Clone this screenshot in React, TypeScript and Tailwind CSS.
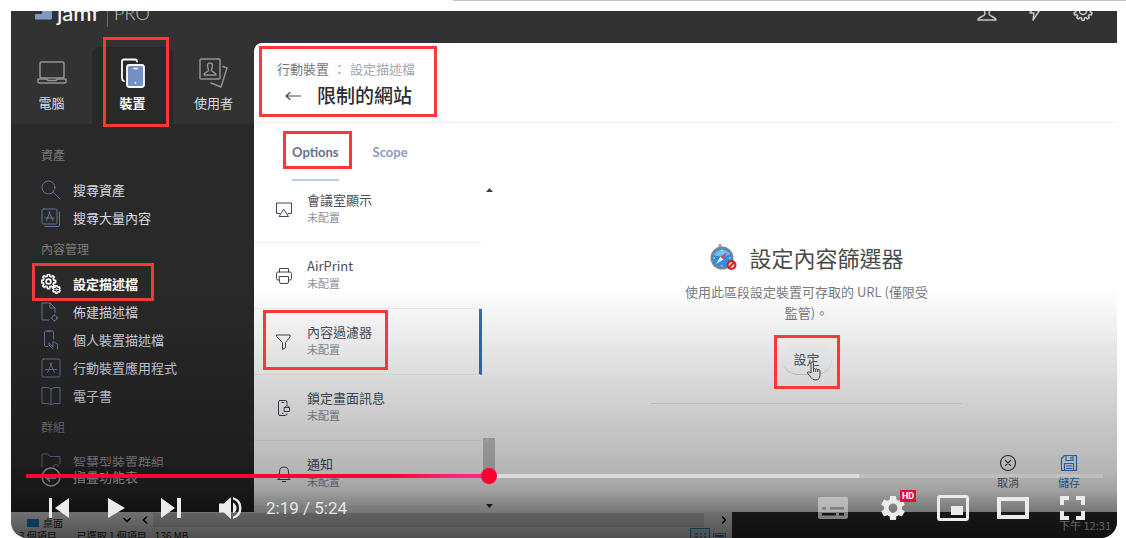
import type { ReactNode } from "react";
import clsx from "clsx";
import { MdSettings } from "react-icons/md";

/* ========================================
   HELPERS
======================================== */

function gearPath(cx: number, cy: number, teeth: number, outer: number, inner: number) {
  const step = (Math.PI * 2) / teeth;
  const points: string[] = [];
  for (let i = 0; i < teeth; i++) {
    const a = i * step - Math.PI / 2;
    [
      [-0.32, inner],
      [-0.2, outer],
      [0.2, outer],
      [0.32, inner],
    ].forEach(([offset, r]) => {
      const t = a + offset * step;
      points.push(`${(cx + Math.cos(t) * r).toFixed(2)} ${(cy + Math.sin(t) * r).toFixed(2)}`);
    });
  }
  return `M${points.join("L")}Z`;
}

// Red frame drawn around a control
function Highlight({ className }: { className: string }) {
  return (
    <span
      aria-hidden="true"
      className={clsx("pointer-events-none absolute z-30 border-3 border-[#fb3838]", className)}
    />
  );
}

function Icon({ size = 20, className, children }: { size?: number; className?: string; children: ReactNode }) {
  return (
    <svg
      width={size}
      height={size}
      viewBox={`0 0 ${size} ${size}`}
      fill="none"
      stroke="currentColor"
      strokeLinejoin="round"
      strokeLinecap="round"
      aria-hidden="true"
      className={clsx("shrink-0", className)}
    >
      {children}
    </svg>
  );
}

/* ========================================
   SIDEBAR ICONS
======================================== */

const searchIcon = (
  <>
    <circle cx="7.5" cy="7.5" r="6.5" />
    <path d="M12.5 12.5L19 19" />
  </>
);

const appsIcon = (
  <>
    <rect x="1" y="1" width="15" height="15" rx="1.5" />
    <path d="M18.5 4V17a1.5 1.5 0 0 1-1.5 1.5H4M9 4L5.5 12.5M8 4L12 12.5M4 10H13" />
  </>
);

const gearsIcon = (
  <>
    <path d={gearPath(7.5, 7.5, 8, 7.2, 5.4)} strokeWidth="1.6" />
    <circle cx="7.5" cy="7.5" r="2.4" strokeWidth="1.6" />
    <path d={gearPath(15.5, 15.5, 6, 3.8, 2.8)} strokeWidth="1.4" />
    <circle cx="15.5" cy="15.5" r="0.8" />
  </>
);

const docGearIcon = (
  <>
    <path d="M8 18H1V1H9L14 6V11M9 1V6H14" />
    <circle cx="13.5" cy="16" r="2.5" />
    <path d="M13.5 12.5v1M13.5 18.5v1M10 16h1M16 16h1" />
  </>
);

const phoneHandIcon = (
  <>
    <path d="M7 16.5H5A1.5 1.5 0 0 1 3.5 15V2A1.5 1.5 0 0 1 5 .8H11A1.5 1.5 0 0 1 12.5 2V9M6.5 1.5H9.5" />
    <path d="M8 13L12 17V11.5L16.5 14V19M8 13V15L12 19" />
  </>
);

const appIcon = (
  <>
    <rect x="1" y="1" width="18" height="18" rx="1.5" />
    <path d="M11 5L6.5 14.5M9 5L13.5 14.5M4.5 11.5H15.5" />
  </>
);

const bookIcon = <path d="M10 3V18M10 3L7 1.5H1V17.5H7L10 19L13 17.5H19V1.5H13L10 3Z" />;

const folderIcon = (
  <>
    <path d="M1 17V2H7L9 4.5H19V12" />
    <circle cx="15" cy="15" r="2.5" />
    <path d="M1 17H11" />
  </>
);

const sections = [
  {
    title: "資產",
    items: [
      { label: "搜尋資產", icon: searchIcon },
      { label: "搜尋大量內容", icon: appsIcon },
    ],
  },
  {
    title: "內容管理",
    items: [
      { label: "設定描述檔", icon: gearsIcon, active: true },
      { label: "佈建描述檔", icon: docGearIcon },
      { label: "個人裝置描述檔", icon: phoneHandIcon },
      { label: "行動裝置應用程式", icon: appIcon },
      { label: "電子書", icon: bookIcon },
    ],
  },
  {
    title: "群組",
    items: [{ label: "智慧型裝置群組", icon: folderIcon, faded: true }],
  },
] as {
  title: string;
  items: { label: string; icon: ReactNode; active?: boolean; faded?: boolean }[];
}[];

/* ========================================
   TOP BAR
======================================== */

function TopBar() {
  return (
    <header className="flex h-8 shrink-0 items-start overflow-hidden bg-[#323232] pr-6 pl-6">
      <div className="-mt-2.5 flex h-6 items-center">
        <svg width="18" height="24" viewBox="0 0 18 24" aria-hidden="true">
          <path d="M0 13H7V4H17V17Q17 18.5 15.5 18.5H0Z" fill="#7e98c4" />
          <path d="M0 12.5H6" stroke="#323232" />
        </svg>
        <span className="ml-1 font-[Lato,sans-serif] text-[22px] leading-6 font-medium text-white">jamf</span>
        <span className="ml-2 h-7 w-px bg-[#6a6a6a]" />
        <span className="ml-1.5 font-[Lato,sans-serif] text-lg leading-6 font-light text-[#c4c4c4]">PRO</span>
      </div>
      <div className="-mt-2.5 ml-auto flex gap-7 text-[#c6c8d0]">
        <button type="button" aria-label="Account">
          <Icon>
            <path
              strokeWidth="1.5"
              d="M10 1C6 1 5.5 4 6.5 8C7.5 10.5 8 11 8 13C8 15.5 1 15.5 1 19H19C19 15.5 12 15.5 12 13C12 11 12.5 10.5 13.5 8C14.5 4 14 1 10 1Z"
            />
          </Icon>
        </button>
        <button type="button" aria-label="Notifications">
          <Icon>
            <path strokeWidth="1.5" d="M11 2L5 12H9L8 19L14.500 9.5H11L12.5 2Z" />
          </Icon>
        </button>
        <button type="button" aria-label="Settings">
          <Icon>
            <path strokeWidth="1.5" d={gearPath(10, 10, 10, 9.2, 7.2)} />
            <circle cx="10" cy="10" r="3.5" strokeWidth="1.5" />
          </Icon>
        </button>
      </div>
    </header>
  );
}

/* ========================================
   SIDEBAR
======================================== */

function Sidebar() {
  const tab = "relative flex flex-1 flex-col items-center gap-1 pt-2.5 text-[13px] leading-5";
  return (
    <aside className="relative flex w-[243px] shrink-0 flex-col bg-[#292929] text-[#d5d9e3]">
      <div className="flex h-[81px] shrink-0 bg-[#323232]">
        <button type="button" className={tab}>
          <Icon size={32} className="mt-1 text-[#929292]">
            <rect x="4" y="5" width="24" height="16" rx="1.5" strokeWidth="1.5" />
            <path strokeWidth="1.5" d="M2 22H11L12 23.5H20L21 22H30V24.5Q30 26 28.5 26H3.5Q2 26 2 24.5Z" />
          </Icon>
          電腦
        </button>
        <div className="relative flex flex-1">
          <button type="button" className={clsx(tab, "mt-1 rounded-t-lg bg-[#292929] font-bold text-white")}>
            <Icon size={32} className="text-white">
              <path strokeWidth="1.8" d="M7 24Q5 23.5 5 21.5V4.5Q5 2.5 7 2.5H18Q20 2.5 20 4.5" />
              <rect x="10" y="8" width="17" height="22" rx="2.5" fill="#7591c4" strokeWidth="1.8" />
              <path strokeWidth="1.6" d="M17 11.5H20M18.5 25.5V26" />
            </Icon>
            裝置
          </button>
          <Highlight className="-top-[6px] left-[11px] h-[90px] w-[66px]" />
        </div>
        <button type="button" className={tab}>
          <Icon size={32} className="mt-1 text-[#929292]">
            <rect x="2" y="2" width="20" height="20" rx="1" strokeWidth="1.5" />
            <path
              strokeWidth="1.5"
              d="M12 6C9.5 6 9 8 10 11L10.5 13.5C10.5 15 6 15 6 18H18C18 15 13.5 15 13.5 13.5L14 11C15 8 14.5 6 12 6Z"
            />
            <path strokeWidth="1.5" d="M25 9.5L29 11L23 30L13 26" />
          </Icon>
          使用者
        </button>
      </div>

      <nav className="min-h-0 flex-1 overflow-hidden pt-3.5 pl-[30px]">
        {sections.map((section) => (
          <div key={section.title}>
            <h2 className="flex h-[38px] items-center pb-1 text-xs text-[#7c7c7c]">{section.title}</h2>
            <ul>
              {section.items.map((item) => (
                <li key={item.label} className="relative">
                  <a
                    href="#"
                    className={clsx(
                      "flex h-7 items-center gap-3 text-[13px]",
                      item.active && "font-bold text-white",
                      item.faded && "text-[#8f929a]"
                    )}
                  >
                    <Icon className={item.active ? "text-white" : "text-[#66749a]"}>{item.icon}</Icon>
                    {item.label}
                  </a>
                  {item.active && <Highlight className="-top-[7px] -left-[9px] h-[38px] w-[122px]" />}
                </li>
              ))}
            </ul>
          </div>
        ))}
      </nav>

      {/* Collapse menu, pinned over the end of the list */}
      <button
        type="button"
        className="absolute inset-x-0 bottom-0 flex h-[45px] items-start gap-3 bg-[#262626] pl-[30px] text-[13px] leading-5 text-[#b9b9b9]"
      >
        <Icon>
          <circle cx="10" cy="10" r="9" strokeWidth="1.4" />
          <path strokeWidth="1.4" d="M14.5 11H5.5M8.5 8L5.5 11L8.5 14" />
        </Icon>
        摺疊功能表
      </button>
    </aside>
  );
}

/* ========================================
   PAYLOAD LIST
======================================== */

const payloads = [
  {
    name: "會議室顯示",
    icon: <path d="M5 12.5H1.5V2H16.5V12.5H13M9 8.5L13.5 15.5H4.5Z" />,
  },
  {
    name: "AirPrint",
    icon: (
      <path d="M4.5 5V1.5H13.5V5M4.5 13H3Q1.5 13 1.5 11.5V6.5Q1.5 5 3 5H15Q16.5 5 16.5 6.5V11.5Q16.5 13 15 13H13.5M4.5 9.5H13.5V15Q13.5 16.5 12 16.5H6Q4.5 16.5 4.5 15Z" />
    ),
  },
  {
    name: "內容過濾器",
    selected: true,
    icon: <path d="M2 2H15V4L10.5 9.5V14.5L7.5 16.5V9.5L2 4Z" />,
  },
  {
    name: "鎖定畫面訊息",
    icon: (
      <>
        <path d="M12 5V3Q12 1.5 10.5 1.5H5Q3.5 1.5 3.5 3V15Q3.5 16.5 5 16.5H10.5Q12 16.5 12 15M7 3.5H8.5M7.5 14.5H8" />
        <rect x="9.5" y="8.5" width="5" height="4" />
        <path d="M10.5 8.5V7.5Q12 5 13.5 7.5V8.5" />
      </>
    ),
  },
  {
    name: "通知",
    icon: <path d="M4.5 13V7Q4.5 2 9 2Q13.5 2 13.5 7V13L15 14.5H3ZM7.5 16.5H10.5" />,
  },
] as { name: string; icon: ReactNode; selected?: boolean }[];

function PayloadList() {
  return (
    <div className="flex w-[242px] shrink-0 overflow-hidden">
      <ul className="w-[228px] shrink-0">
        {payloads.map((payload) => (
          <li key={payload.name} className="relative">
            <a
              href="#"
              className={clsx(
                "flex h-[66px] items-center gap-3.5 border-b border-[#f1f1f1] pl-[21px]",
                payload.selected && "border-r-3 border-r-[#2a70d4]"
              )}
            >
              <Icon size={18} className="text-[#3f4556]">
                {payload.icon}
              </Icon>
              <span className="flex flex-col pb-1">
                <span className="text-[13px] leading-[18px] text-[#4a4f5c]">{payload.name}</span>
                <span className="text-[11px] leading-4 text-[#8d929c]">未配置</span>
              </span>
            </a>
            {payload.selected && <Highlight className="top-[1px] left-[9px] h-[60px] w-[125px]" />}
          </li>
        ))}
      </ul>
      {/* Scroll bar */}
      <div className="flex flex-1 flex-col items-center pt-[11px]">
        <svg width="7" height="4" viewBox="0 0 7 4" aria-hidden="true">
          <path d="M0 4L3.5 0L7 4Z" fill="#404040" />
        </svg>
        <div className="mt-auto h-[38px] w-3 bg-[#c6c6c6]" />
        <svg width="7" height="4" viewBox="0 0 7 4" className="mt-7 mb-1" aria-hidden="true">
          <path d="M0 0L3.5 4L7 0Z" fill="#303030" />
        </svg>
      </div>
    </div>
  );
}

/* ========================================
   CONTENT FILTER PANEL
======================================== */

function FilterPanel() {
  return (
    <section className="flex min-w-0 flex-1 flex-col items-center pt-16">
      <div className="flex items-center gap-3">
        <svg width="28" height="28" viewBox="0 0 28 28" aria-hidden="true">
          <path d="M11 1V4" stroke="#a9a9a9" strokeWidth="3" />
          <circle cx="13" cy="15" r="11.5" fill="#7f858c" />
          <circle cx="13" cy="15" r="9.5" fill="#2c8fe0" />
          <path d="M4.500 12Q12 2 21.500 11Q14 15 4.500 12Z" fill="#6fc0f4" />
          <path d="M7 21L11.5 13.5L14.5 16.500Z" fill="#f2f6fa" />
          <path d="M18.5 9L11.5 13.5L14.5 16.500Z" fill="#c8505c" />
          <path d="M13 6.5V8M13 22V23.5M4.5 15H6M20 15H21.5" stroke="#fff" />
          <circle cx="22.500" cy="22" r="5" fill="#c9262d" />
          <circle cx="22.500" cy="22" r="2.8" fill="#f3dada" />
          <path d="M20 24.500L25 19.500" stroke="#c9262d" strokeWidth="2" />
        </svg>
        <h2 className="text-[22px] leading-8 text-[#4a4a4a]">設定內容篩選器</h2>
      </div>
      <p className="mt-2 w-[252px] text-center text-[13px] leading-[21px] text-[#7b7b7f]">
        使用此區段設定裝置可存取的 URL (僅限受監管)。
      </p>
      <div className="relative mt-5">
        <button
          type="button"
          className="h-8 w-[50px] rounded-2xl border-b border-[#d4d4d8] bg-[#fcfdff] text-[13px] text-[#55575e]"
        >
          設定
        </button>
        <svg width="16" height="20" viewBox="0 0 16 20" className="absolute top-[18px] left-6" aria-hidden="true">
          <path
            d="M5 11V2.5Q5 1 6.2 1T7.5 2.5V8Q8.5 7 9.5 8.2Q10.7 7.4 11.7 8.8Q13 8 14 9.5V14Q14 19 9.5 19Q6.5 19 5 16.5L1.5 12Q1.5 9.5 5 12Z"
            fill="#fafafa"
            stroke="#4c4c4c"
            strokeLinejoin="round"
          />
          <path d="M7.5 8V11M9.7 8.5V11M11.8 9V11" stroke="#4c4c4c" />
        </svg>
        <Highlight className="-top-[8px] -left-[8px] h-[54px] w-[66px]" />
      </div>
      <hr className="mt-7 w-1/2 border-[#e6e6e6]" />
      <div className="mt-auto mr-[37px] mb-[22px] flex gap-[39px] self-end text-[11px] leading-4">
        <button type="button" className="flex flex-col items-center gap-0.5 text-[#66666b]">
          <Icon size={18} className="text-[#38383c]">
            <circle cx="9" cy="9" r="7.5" strokeWidth="1.2" />
            <path strokeWidth="1.2" d="M6.5 6.5L11.5 11.5M11.5 6.5L6.5 11.5" />
          </Icon>
          取消
        </button>
        <button type="button" className="flex flex-col items-center gap-0.5 text-[#2f7ede]">
          <Icon size={18}>
            <path
              strokeWidth="1.2"
              d="M4.5 1.5H16.5V16.5H1.5V4.5ZM6 1.5V6.5H13V1.5M11 3V5M4.5 16.5V9.5H13.5V16.5M6.5 12H11.5M6.5 14.5H11.5"
            />
          </Icon>
          儲存
        </button>
      </div>
    </section>
  );
}

function ProfilePage() {
  return (
    <main className="flex min-w-0 flex-1 flex-col rounded-tl-lg bg-white">
      <div className="h-20 shrink-0 border-b border-[#f0f0f0] pt-[3px] pl-[5px]">
        <div className="relative h-[71px] w-[178px] pt-3.5 pl-[18px]">
          <p className="flex gap-1 text-[13px] leading-[18px] text-[#a4a6ad]">
            <a href="#" className="text-[#74777f]">
              行動裝置
            </a>
            ：<a href="#">設定描述檔</a>
          </p>
          <div className="mt-[3px] flex items-center gap-4 pl-2">
            <button type="button" aria-label="Back">
              <Icon size={16} className="text-[#4c4c50]">
                <path strokeWidth="1.2" d="M15.5 9H1M5 5.5L1 9L5 12.5" />
              </Icon>
            </button>
            <h1 className="text-[19px] leading-7 font-medium text-[#2e2e30]">限制的網站</h1>
          </div>
          <Highlight className="inset-0" />
        </div>
      </div>
      <div className="flex h-[54px] shrink-0 gap-[34px] pl-[38px] font-[Lato,sans-serif] text-[13px] font-bold">
        <button type="button" className="relative pt-1.5 text-[#66708a]">
          Options
          <span className="absolute inset-x-0 -bottom-1 h-0.5 bg-[#b9cde8]" />
          <Highlight className="top-2 -left-[9px] h-[38px] w-[69px]" />
        </button>
        <button type="button" className="pt-1.5 text-[#8b9cbf]">
          Scope
        </button>
      </div>
      <div className="flex min-h-0 flex-1">
        <PayloadList />
        <FilterPanel />
      </div>
    </main>
  );
}

/* ========================================
   FILE WINDOW BEHIND THE BROWSER
======================================== */

function FileWindow() {
  return (
    <footer className="flex h-[26px] shrink-0 overflow-hidden bg-[#f4f4f4] text-[10px] text-[#222]">
      <div className="flex w-[721px] shrink-0 flex-col">
        <div className="flex h-4 shrink-0 items-center">
          <span className="mt-1.5 ml-4 h-2 w-3 shrink-0 bg-[#0a94dd]" />
          <span className="mt-1.5 ml-1 leading-4">桌面</span>
          <Icon size={8} className="ml-[60px] text-black">
            <path strokeWidth="1.5" d="M1 2.5L4 5.5L7 2.5" />
          </Icon>
          <Icon size={8} className="ml-2.5 text-black">
            <path strokeWidth="1.5" d="M5.5 1L2.5 4L5.5 7" />
          </Icon>
          <span className="ml-1 h-3.5 flex-1 bg-[#d6d6d6]" />
          <Icon size={8} className="mr-1 ml-4 text-black">
            <path strokeWidth="1.5" d="M2.5 1L5.500 4L2.5 7" />
          </Icon>
        </div>
        <div className="flex shrink-0 items-center pr-1 pl-2 leading-4">
          <span>3 個項目</span>
          <span className="ml-5">已選取 1 個項目</span>
          <span className="ml-2">136 MB</span>
          <svg width="38" height="16" viewBox="0 0 38 16" className="ml-auto" aria-hidden="true">
            <rect x="0.5" y="0.5" width="19" height="16" fill="#cdeaf7" stroke="#3b9cc9" />
            <path d="M5 6H8M10 6H12M14 6H16M5 9H8M10 9H12M14 9H16" stroke="#555" />
            <rect x="23.5" y="5.5" width="12" height="11" fill="#eee" stroke="#999" />
            <path d="M25 8H34" stroke="#2c6fd0" strokeWidth="2" />
          </svg>
        </div>
      </div>
      <div className="flex flex-1 items-center justify-end bg-[#323232] pr-1.5 text-[11px] text-[#f4f4f4]">下午 12:31</div>
    </footer>
  );
}

/* ========================================
   VIDEO PLAYER CONTROLS
======================================== */

const leftControls = [
  { label: "Previous", shape: <path d="M6 6H9V26H6ZM26 6V26L12 16Z" /> },
  { label: "Play", shape: <path d="M8 6V26L25 16Z" /> },
  { label: "Next", shape: <path d="M4 6V26L18 16ZM20 6H24V26H20Z" /> },
  {
    label: "Mute",
    shape: (
      <>
        <path d="M5 11.5H10L17 5V27L10 20.5H5ZM19 10.5Q22.5 12.5 22.5 16T19 21.5Z" />
        <path d="M19 5V7.5Q25 9.5 25 16T19 24.5V27Q27.500 24.5 27.500 16T19 5Z" />
      </>
    ),
  },
];

const rightControls = [
  {
    label: "Subtitles",
    dim: true,
    shape: (
      <path
        fillRule="evenodd"
        d="M4 5H30Q32 5 32 7V25Q32 27 30 27H4Q2 27 2 25V7Q2 5 4 5ZM6 15V17.5H10V15ZM14 15V17.5H28V15ZM6 21V23.5H20V21ZM23 21V23.5H28V21Z"
      />
    ),
  },
  { label: "Settings", shape: null, hd: true },
  {
    label: "Miniplayer",
    shape: (
      <path
        fillRule="evenodd"
        d="M4 3H30Q33 3 33 6V26Q33 29 30 29H4Q1 29 1 26V6Q1 3 4 3ZM4 6V26H30V6ZM15 14H27V23H15Z"
      />
    ),
  },
  { label: "Theater mode", shape: <path fillRule="evenodd" d="M1 5H33V27H1ZM5 9V23H29V9Z" /> },
  {
    label: "Full screen",
    shape: <path d="M4 4H13V8H8V13H4ZM20 4H29V13H25V8H20ZM4 19H8V24H13V28H4ZM25 19H29V28H20V24H25Z" />,
  },
] as { label: string; shape: ReactNode; dim?: boolean; hd?: boolean }[];

function PlayerControls() {
  return (
    <div className="absolute inset-x-0 bottom-0 z-20 flex h-[250px] flex-col justify-end bg-[linear-gradient(to_bottom,rgba(0,0,0,0)_0%,rgba(0,0,0,0.1)_25%,rgba(0,0,0,0.21)_53%,rgba(0,0,0,0.29)_73%,rgba(0,0,0,0.37)_81%,rgba(0,0,0,0.45)_85%,rgba(0,0,0,0.54)_90%,rgba(0,0,0,0.67)_100%)] pr-[14px] pb-3 pl-[15px]">
      <div className="relative flex h-1 items-center bg-white/20">
        <div className="h-1 w-[43%] bg-linear-to-r from-[#ff0033] from-80% to-[#ff2791]" />
        <div className="h-1 flex-1 bg-white/45" />
        <div className="h-1 w-[22.7%]" />
        <span className="absolute left-[43%] size-4 -translate-x-1/2 rounded-full bg-[#ff0033]" />
        <input
          type="range"
          aria-label="Seek"
          min={0}
          max={324}
          defaultValue={139}
          className="absolute inset-x-0 h-4 w-full opacity-0"
        />
      </div>
      <div className="mt-3 flex h-9 items-center text-[#ebebeb]">
        <div className="flex items-center pl-1">
          {leftControls.map((control) => (
            <button key={control.label} type="button" aria-label={control.label} className="flex w-[57px] justify-center">
              <svg width="32" height="32" viewBox="0 0 32 32" fill="currentColor" aria-hidden="true">
                {control.shape}
              </svg>
            </button>
          ))}
          <span className="ml-2 font-[Roboto,sans-serif] text-[17px] leading-6 text-[#e6e6e6]">2:19 / 5:24</span>
        </div>
        <div className="ml-auto flex items-center">
          {rightControls.map((control) => (
            <button
              key={control.label}
              type="button"
              aria-label={control.label}
              className={clsx("relative flex w-[60px] justify-center", control.dim && "opacity-50")}
            >
              {control.shape ? (
                <svg width="34" height="32" viewBox="0 0 34 32" fill="currentColor" aria-hidden="true">
                  {control.shape}
                </svg>
              ) : (
                <MdSettings size={30} />
              )}
              {control.hd && (
                <span className="absolute -top-[3px] left-[37px] bg-[#e0103a] px-0.5 font-[Roboto,sans-serif] text-[9px] leading-3 font-bold text-white">
                  HD
                </span>
              )}
            </button>
          ))}
        </div>
      </div>
    </div>
  );
}

export default function App() {
  return (
    <div className="flex h-screen flex-col bg-white pr-[9px] pl-[11px] font-['Noto_Sans_CJK_TC',sans-serif]">
      <div className="-mr-[9px] ml-[442px] h-px shrink-0 bg-[#c4c4c4]" />
      <div className="relative mt-2.5 flex min-h-0 flex-1 flex-col overflow-hidden rounded-b-2xl">
        <TopBar />
        <div className="flex min-h-0 flex-1 bg-[#292929]">
          <Sidebar />
          <ProfilePage />
        </div>
        <FileWindow />
        <PlayerControls />
      </div>
    </div>
  );
}
